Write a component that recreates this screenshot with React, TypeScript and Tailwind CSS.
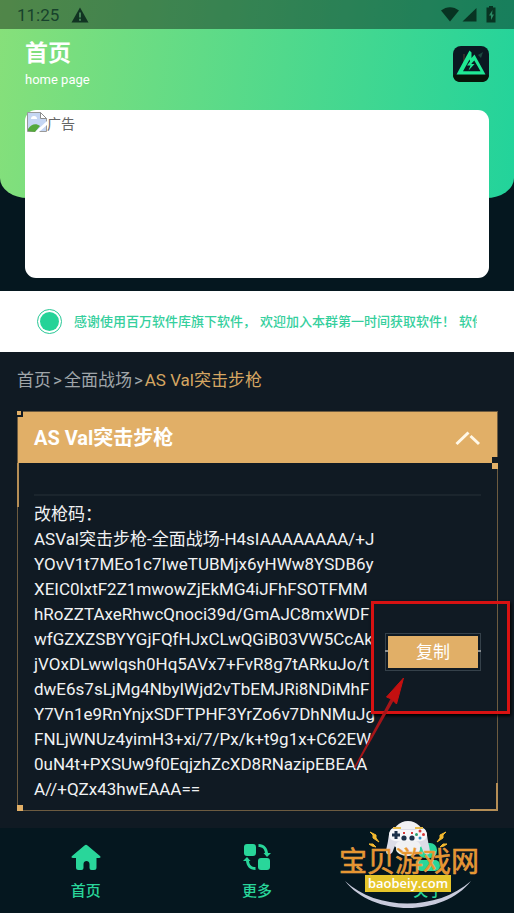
import React from "react";

const notices = ["感谢使用百万软件库旗下软件，", "欢迎加入本群第一时间获取软件！", "软件更新"];

const codeLines = [
  "改枪码：",
  "ASVal突击步枪-全面战场-H4sIAAAAAAAA/+J",
  "YOvV1t7MEo1c7IweTUBMjx6yHWw8YSDB6y",
  "XEIC0lxtF2Z1mwowZjEkMG4iJFhFSOTFMM",
  "hRoZZTAxeRhwcQnoci39d/GmAJC8mxWDF",
  "wfGZXZSBYYGjFQfHJxCLwQGiB03VW5CcAk",
  "jVOxDLwwlqsh0Hq5AVx7+FvR8g7tARkuJo/t",
  "dwE6s7sLjMg4NbyIWjd2vTbEMJRi8NDiMhF",
  "Y7Vn1e9RnYnjxSDFTPHF3YrZo6v7DhNMuJg",
  "FNLjWNUz4yimH3+xi/7/Px/k+t9g1x+C62EW",
  "0uN4t+PXSUw9f0EqjzhZcXD8RNazipEBEAA",
  "A//+QZx43hwEAAA==",
];

function StatusBar() {
  return (
    <div className="flex h-[29px] items-center justify-between bg-black/40 pl-[17px] pr-[18px] text-[#17422c]">
      <div className="flex items-center gap-3">
        <span className="text-[17px] leading-6">11:25</span>
        <svg width="18" height="16" viewBox="0 0 18 16" fill="#113322">
          <path d="M9 0.500 17.500 15.500H.500Z" />
          <path d="M8 5.500h2v5H8zM8 11.800h2v2H8z" fill="#458257" />
        </svg>
      </div>
      <svg width="56" height="18" viewBox="0 0 56 18" fill="#083322">
        <path d="M1 4.500C6.500 0 13.500 0 19 4.500L10 15.500Z" />
        <path d="M36.500 2v13.500H22.500Z" />
        <path d="M49 0h4v1.500h2.500V16.500H46.500V1.500H49z" />
        <path d="M52.500 4 49 9.500h2V14l3-5.500h-2z" fill="#2a8a65" />
      </svg>
    </div>
  );
}

function AppLogo() {
  return (
    <svg width="36" height="36" viewBox="0 0 36 36" className="mt-2">
      <rect width="36" height="36" rx="8" fill="#0a1822" />
      <path d="M0 28.500h36c0 5-3 7.500-8 7.500H8c-5 0-8-2.500-8-7.500Z" fill="#071509" />
      <path d="M11 8v9" stroke="#5a4030" />
      <path d="M30 6l-5 3 3 3Z" fill="#1b4a41" />
      <path
        fillRule="evenodd"
        fill="#1fe893"
        d="M3.500 28.500 16.500 4.500 18.500 6.500V12L21.500 8.500 32.500 28.500ZM10 25.200H27.500L21.300 14.500 18 18 16.500 13.500Z"
      />
      <path d="M19.500 12 14 19.500h3.500l-2 5 6-6.500H18l3-5Z" fill="#1fe893" />
    </svg>
  );
}

function BrokenImage() {
  return (
    <svg width="20" height="20" viewBox="0 0 20 20">
      <path d="M.5.500h13l6 6v13H.5Z" fill="#c5d6f3" stroke="#9a9a9a" />
      <path d="M13.500.500v6h6Z" fill="#fff" stroke="#8d8d8d" />
      <path d="M4 7c0-2 1-3 3-3s3 1 3 3Z" fill="#fff" />
      <path d="M1 19v-2c3-5 8-6 12-3l-5 6Z" fill="#55a93c" />
      <path d="M8 20 20 9v4l-8 7Z" fill="#fff" />
    </svg>
  );
}

function CopyButton() {
  return (
    <div className="relative shrink-0">
      <button className="relative block border border-[#35414a] p-[2px]">
        <span className="block bg-[#e1af67] px-7 py-1 text-[17px] leading-6 text-white">复制</span>
        <span className="absolute top-4 -left-px h-[2px] w-[3px] bg-[#8b8f91]" />
        <span className="absolute top-4 -right-px h-[2px] w-[3px] bg-[#8b8f91]" />
      </button>
      {/* highlight frame and pointer over the button */}
      <div className="pointer-events-none absolute -top-8 -left-[14px] h-[113px] w-[139px] border-[3px] border-[#d81212] shadow-[1px_2px_3px_#000]" />
      <svg className="pointer-events-none absolute top-11 -left-8" width="54" height="92" viewBox="0 0 54 92">
        <path d="M1 90.500 38 21l3 2L2.500 91Z" fill="#a51519" />
        <path d="M50.500 1 33.500 20l5 2 5 5Z" fill="#c41010" stroke="#c41010" />
      </svg>
    </div>
  );
}

function GunCard() {
  return (
    <section className="relative mx-4 mt-[19px] ml-[17px] border border-[#6d5b40]">
      <div className="flex h-[51px] items-center justify-between bg-[#e1af67] px-4">
        <h2 className="text-[20px] leading-6 font-bold text-white">AS Val突击步枪</h2>
        <button aria-label="收起">
          <svg width="26" height="16" viewBox="0 0 26 16" fill="none" stroke="#fff8e8" strokeWidth="3">
            <path d="M1.500 14 13.500 2.500M15.500 6 24 14" />
          </svg>
        </button>
      </div>

      <div className="mx-4 mt-[31px] border-t-2 border-[#1b252d] pt-[6px] pb-2">
        <div className="flex items-center justify-between">
          <div className="text-[17px] leading-[25px] whitespace-nowrap text-[#f0f2f3]">
            {codeLines.map((line) => (
              <div key={line}>{line}</div>
            ))}
          </div>
          <CopyButton />
        </div>
      </div>

      {/* corner ornaments */}
      <span className="absolute -top-px -left-px h-[6px] w-[6px] border-r-2 border-b-2 border-[#101a23] bg-[#e1af67]" />
      <span className="absolute top-[51px] -left-px h-11 w-[2px] bg-[#b58e56]" />
      <span className="absolute top-[45px] -right-px h-[6px] w-[6px] bg-[#101a23]" />
      <span className="absolute top-[51px] -right-px h-[6px] w-[6px] bg-[#e1af67]" />
      <span className="absolute -bottom-px -left-px h-[6px] w-[6px] bg-[#e1af67]" />
      <span className="absolute -right-px -bottom-px h-7 w-7 border-r-2 border-b-2 border-[#b58e56]" />
    </section>
  );
}

function SiteBadge() {
  return (
    <svg className="pointer-events-none absolute -top-2 left-1/2 -ml-24" width="160" height="92" viewBox="0 0 160 92">
      <path d="M13 61C45 91 105 91 139 61 111 97 41 97 13 61Z" fill="#c9cbdc" />
      {/* controller */}
      <ellipse cx="76" cy="17" rx="16" ry="16" fill="#f1f1f3" />
      <ellipse cx="76" cy="29" rx="12" ry="7" fill="#f1f1f3" />
      <path
        d="M61 8c-4 1-4 8-5 13-1 6-3 11-1 13 2 1 5 0 6-3 2-6 4-10 8-10h14c4 0 6 4 8 10 1 3 4 4 6 3 2-2 0-7-1-13-1-5-1-12-5-13-3-1-6 0-8 1H69c-2-1-5-2-8-1Z"
        fill="#dcdde7"
      />
      <path d="M60 9c-4 3-4 9 0 11 3 2 8 1 16 1s13 1 16-1c4-2 4-8 0-11-3-2-7 0-9 1H69c-2-1-6-3-9-1Z" fill="#f6f6f8" />
      <path d="M61 8h8M83 8h8" stroke="#e9bd4b" strokeWidth="2" />
      <path d="M64 11v8M60 15h8" stroke="#1c3149" strokeWidth="3" />
      <circle cx="72" cy="18" r="2.600" fill="#1c3149" />
      <circle cx="80" cy="18" r="2.600" fill="#1c3149" />
      <circle cx="88" cy="11" r="1.500" fill="#d63939" />
      <circle cx="88" cy="18" r="1.500" fill="#2a8fc4" />
      <circle cx="84.500" cy="14.500" r="1.500" fill="#2ca06d" />
      <circle cx="91.500" cy="14.500" r="1.500" fill="#d63939" />
      <path d="M71 13h2M79 13h2" stroke="#d63939" strokeWidth="2" />
      {/* sparks */}
      <path d="M38 12l6 3 0 3 3 4-6-4 0-3ZM37 24l4 0 3 3-4-1Z" fill="#f4ba2f" stroke="#f4ba2f" />
      <path d="M114 12l-6 3 0 3-3 4 6-4 0-3ZM115 24l-4 0-3 3 4-1Z" fill="#f4ba2f" stroke="#f4ba2f" />
      <rect x="33" y="55" width="86" height="17" fill="#e6c52a" />
      <text x="76" y="68" textAnchor="middle" fontFamily="Open Sans, sans-serif" fontSize="13" fontWeight="600" fill="#fff">
        baobeiy.com
      </text>
      <text x="7" y="52" fontFamily="Noto Sans CJK SC, sans-serif" fontSize="28" fill="#e8922a" stroke="#e9a54e" strokeWidth="0.500">
        宝贝游戏网
      </text>
    </svg>
  );
}

const tab = "flex flex-col items-center gap-2 text-[15px] leading-6 font-medium text-[#29d69a]";

function BottomNav() {
  return (
    <nav className="mt-auto grid h-[85px] grid-cols-3 bg-[#05171f] pt-[15px]">
      <a href="#home" className={tab}>
        <svg width="30" height="28" viewBox="0 0 30 28" fill="currentColor">
          <path d="M13.500 2.500c1-1 2-1 3 0L29 13c1 1 .5 2-1 2h-2.500v9.500q0 2.500-2.500 2.500h-2.500q-2 0-2-2v-4c0-4-6-4-6 0v4q0 2-2 2H7.500q-2.500 0-2.500-2.500V15H2c-1.500 0-2-1-1-2Z" />
        </svg>
        首页
      </a>
      <a href="#more" className={tab}>
        <svg width="28" height="28" viewBox="0 0 28 28" fill="currentColor">
          <rect x="1" y="1" width="12" height="12" rx="3" />
          <rect x="15" y="15" width="12" height="12" rx="3" />
          <path d="M15.500 1c6 0 9 4 9.500 9H28l-4 4-3.500-4H22c-.5-4-2.500-6-6.500-6ZM12.500 27C6.500 27 3.500 23 3 18H0l4-4 3.500 4H6c.5 4 2.500 6 6.500 6Z" />
        </svg>
        更多
      </a>
      <div className="relative -mt-[15px] pt-[15px]">
        <a href="#about" className={tab}>
          <svg width="28" height="28" viewBox="0 0 28 28" fill="currentColor">
            <rect x="4" y="0" width="19" height="15" rx="7" />
            <rect x="2" y="17" width="24" height="11" rx="5" />
          </svg>
          关于
        </a>
        <SiteBadge />
      </div>
    </nav>
  );
}

export default function App() {
  return (
    <div className="flex min-h-screen flex-col overflow-x-hidden bg-[#101a23] font-['Roboto','Noto_Sans_CJK_SC',sans-serif]">
      <div className="bg-[#05171f] pb-[93px]">
        <header className="flex flex-col rounded-b-[28px_20px] bg-[linear-gradient(98deg,#87e07a,#22d39b)]">
          <StatusBar />
          <div className="flex items-start justify-between px-[25px] pt-[9px] pb-5">
            <div className="text-white">
              <h1 className="text-[23px] leading-8 font-bold">首页</h1>
              <p className="text-[13px] leading-5">home page</p>
            </div>
            <AppLogo />
          </div>
          <div className="mx-[25px] -mb-20 flex h-[168px] items-start rounded-[11px] bg-white p-[2px] text-[14px] leading-6 text-[#666]">
            <BrokenImage />
            <span>广告</span>
          </div>
        </header>
      </div>

      <div className="flex h-[61px] items-center bg-white px-[37px]">
        <span className="flex h-[25px] w-[25px] shrink-0 items-center justify-center rounded-full border border-[#29c896]">
          <span className="h-[19px] w-[19px] rounded-full bg-[#25d398]" />
        </span>
        <div className="ml-3 flex gap-1 overflow-hidden text-[13px] leading-6 font-medium whitespace-nowrap text-[#35cf9d]">
          {notices.map((n) => (
            <span key={n}>{n}</span>
          ))}
        </div>
      </div>

      <div className="mt-4 flex gap-[2px] px-[17px] text-[17px] leading-6 text-[#9fa5a9]">
        <a href="#home">首页</a>
        <span>&gt;</span>
        <a href="#maps">全面战场</a>
        <span>&gt;</span>
        <span className="text-[#d5a662]">AS Val突击步枪</span>
      </div>

      <GunCard />
      <BottomNav />
    </div>
  );
}
